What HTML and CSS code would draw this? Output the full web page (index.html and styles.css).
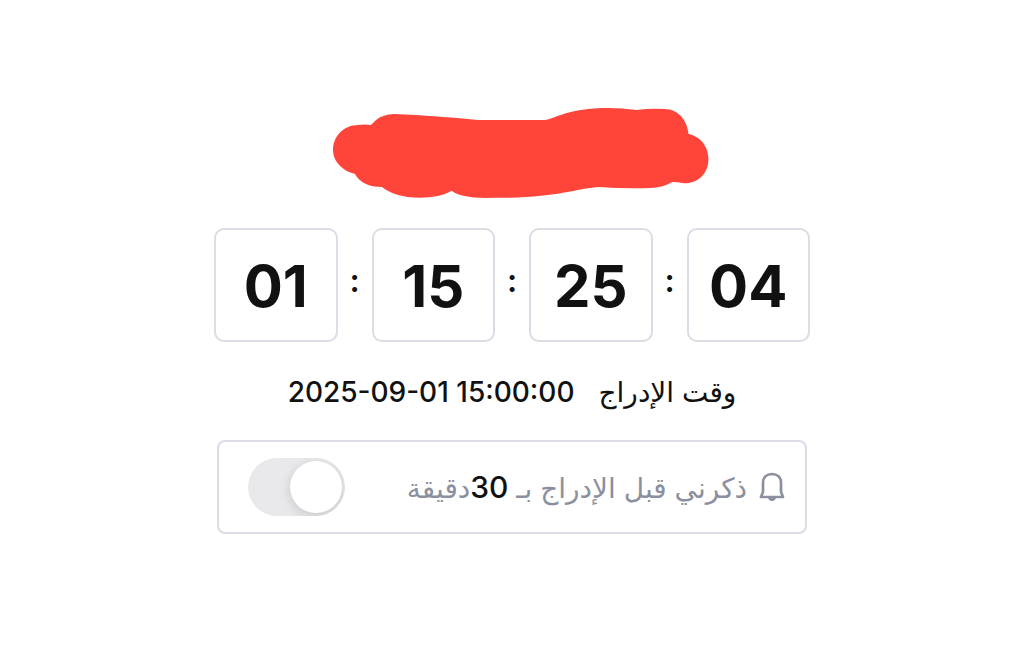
FILE: index.html
```html
<!DOCTYPE html>
<html lang="ar" dir="rtl">
<head>
  <meta charset="UTF-8">
  <meta name="viewport" content="width=device-width, initial-scale=1">
  <title>وقت الإدراج</title>
  <link rel="stylesheet" href="styles.css">
</head>
<body>
  <main class="container">
    <svg class="scribble" viewBox="0 0 376 92" aria-hidden="true">
      <path d="M0 43C0 29 11 18 25 18Q32 17 38 18Q47 7 61 7Q105 9 145 13H212C222 12 235 1 276 1Q289 1 304 3Q318 1 332 2C346 2 355 14 356 27C367 29 376 39 376 52C376 69 362 78 350 76Q345 75 340 75Q329 81 318 81Q294 82 266 80C240 82 226 91 160 91Q128 92 119 84Q107 91 87 91Q61 90 49 80C36 80 27 76 22 67C10 64 0 55 0 43Z" fill="#ff453a"/>
    </svg>

    <div class="countdown" dir="ltr">
      <div class="box">01</div>
      <span class="colon">:</span>
      <div class="box">15</div>
      <span class="colon">:</span>
      <div class="box">25</div>
      <span class="colon">:</span>
      <div class="box">04</div>
    </div>

    <div class="listing">
      <span class="arabic">وقت الإدراج</span>
      <time class="date" dir="ltr" datetime="2025-09-01T15:00:00">2025-09-01 15:00:00</time>
    </div>

    <div class="reminder">
      <label class="reminder-label" for="remind">
        <svg class="bell" viewBox="0 0 26 30" aria-hidden="true">
          <path d="M2 25H24L22 20V11C22 5 18 2 13 2S4 5 4 11V20Z" fill="none" stroke="#8b90a0" stroke-width="2.7" stroke-linejoin="round"/>
          <path d="M9 26H17Q16 29 13 29T9 26Z" fill="#8b90a0"/>
        </svg>
        <span class="arabic">ذكرني قبل الإدراج بـ <b class="minutes">30</b>دقيقة</span>
      </label>
      <input class="switch" type="checkbox" id="remind">
    </div>
  </main>
</body>
</html>
```
FILE: styles.css
```css
* { box-sizing: border-box; }
body {
  margin: 0;
  padding: 107px 16px 32px;
  background: #fff;
  color: #111;
  font-family: Inter, "DejaVu Sans", sans-serif;
  font-optical-sizing: none;
}
.container { max-width: 596px; margin: auto; }
.scribble { display: block; width: 63%; margin-right: 17%; }

.countdown { display: flex; align-items: center; margin-top: 29px; }
.box {
  flex: 1;
  padding: 21px 0 19px;
  border: 2px solid #dadce6;
  border-radius: 10px;
  font-size: 58px;
  font-weight: 700;
  line-height: 70px;
  text-align: center;
}
.colon { width: 34px; padding-bottom: 8px; font-size: 32px; font-weight: 600; text-align: center; }

.listing {
  display: flex;
  justify-content: center;
  align-items: center;
  gap: 24px;
  margin-top: 32px;
  line-height: 36px;
}
.date { font-size: 28px; font-weight: 500; }
.arabic { font-size: 28px; }

.reminder {
  display: flex;
  justify-content: space-between;
  align-items: center;
  margin: 30px 3px 0;
  padding: 16px 20px 16px 29px;
  border: 2px solid #dadce6;
  border-radius: 8px;
}
.reminder-label {
  display: flex;
  align-items: center;
  gap: 12px;
  color: #8b90a0;
}
.bell { width: 26px; height: 30px; }
.minutes { color: #111; font-size: 30px; font-weight: 500; }
.switch {
  appearance: none;
  width: 97px;
  height: 58px;
  margin: 0;
  padding: 3px;
  border-radius: 29px;
  background: #e9e9eb;
  cursor: pointer;
  overflow: hidden;
}
.switch::before {
  content: "";
  display: block;
  width: 52px;
  height: 52px;
  border-radius: 50%;
  background: #fff;
  box-shadow: 0 3px 12px rgba(0,0,0,0.15);
}
.switch:checked { background: #34c759; }
.switch:checked::before { margin-right: auto; }
```
